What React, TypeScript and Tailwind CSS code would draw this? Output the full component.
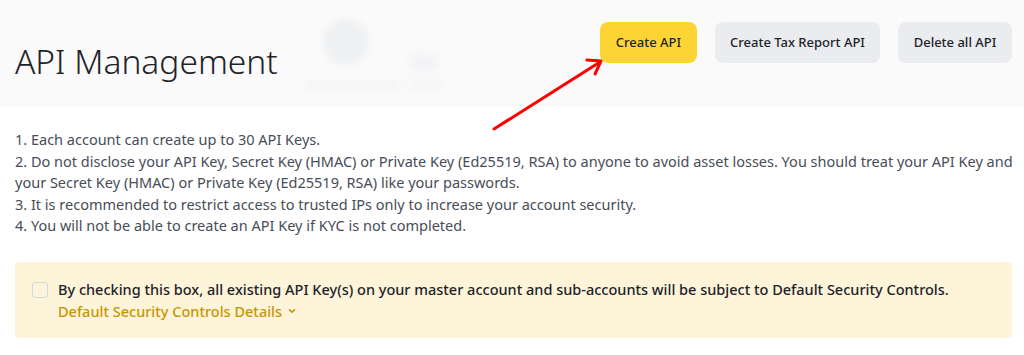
import { useState } from 'react'

const notes = [
    "1. Each account can create up to 30 API Keys.",
    "2. Do not disclose your API Key, Secret Key (HMAC) or Private Key (Ed25519, RSA) to anyone to avoid asset losses. You should treat your API Key and your Secret Key (HMAC) or Private Key (Ed25519, RSA) like your passwords.",
    "3. It is recommended to restrict access to trusted IPs only to increase your account security.",
    "4. You will not be able to create an API Key if KYC is not completed.",
]

export default function App() {
    const [checked, setChecked] = useState(false)

    return (
        <div className="relative w-[1024px] h-[355px] overflow-hidden bg-white text-[#1e2329]" style={{ fontFamily: '"Noto Sans", "Open Sans", sans-serif' }}>
            {/* header */}
            <div className="relative flex items-start justify-between h-[107px] bg-[#fafafa] pl-[15px] pr-[12px]">
                <h1 className="mt-[39px] text-[33.5px] leading-[44px] font-light">API Management</h1>

                {/* faded decoration */}
                <div className="absolute left-[323px] top-[19px] w-[46px] h-[46px] rounded-full bg-[#eef0f2] blur-[3px]" />
                <div className="absolute left-[410px] top-[54px] w-[28px] h-[18px] rounded-full bg-[#f1f2f4] blur-[4px]" />
                <div className="absolute left-[305px] top-[82px] w-[95px] h-[7px] rounded-full bg-[#f2f3f4] blur-[3px]" />
                <div className="absolute left-[410px] top-[82px] w-[32px] h-[6px] rounded-full bg-[#f2f3f4] blur-[3px]" />

                <div className="flex gap-[18px] mt-[22px]">
                    <button className="w-[97px] h-[41px] rounded-[8px] bg-[#fcd535] text-[13px] font-medium text-[#1e2329]">Create API</button>
                    <button className="w-[165px] h-[41px] rounded-[8px] bg-[#eaecef] text-[13px] font-medium text-[#1e2329]">Create Tax Report API</button>
                    <button className="w-[114px] h-[41px] rounded-[8px] bg-[#eaecef] text-[13px] font-medium text-[#1e2329]">Delete all API</button>
                </div>
            </div>

            {/* notes */}
            <div className="pl-[15px] pr-[8px] pt-[22px] text-[14.5px] leading-[21.6px] text-[#474d57]">
                {notes.map(n => (
                    <p key={n}>{n}</p>
                ))}
            </div>

            {/* notice */}
            <div className="mx-[15px] mt-[25px] mr-[12px] h-[76px] rounded-[4px] bg-[#fdf4d9] flex items-start gap-[10px] pl-[17px] pt-[17px]">
                <button
                    onClick={() => setChecked(!checked)}
                    className="w-[16px] h-[16px] mt-[3px] rounded-[3px] border border-[#d5d8dc] bg-[#fdf4d9] shrink-0"
                />
                <div>
                    <p className="text-[14.5px] leading-[21px] font-medium text-[#1e2329]">By checking this box, all existing API Key(s) on your master account and sub-accounts will be subject to Default Security Controls.</p>
                    <p className="mt-[1px] flex items-center gap-[5px] text-[14.5px] leading-[21px] font-medium text-[#c99400]">
                        Default Security Controls Details
                        <svg width="10" height="10" viewBox="0 0 10 10" fill="none"><path d="M2.5 3.8 5 6.2 7.5 3.8" stroke="#c99400" strokeWidth="1.6" strokeLinecap="round" strokeLinejoin="round" /></svg>
                    </p>
                </div>
            </div>

            {/* annotation arrow */}
            <svg className="absolute left-0 top-0 pointer-events-none" width="1024" height="355">
                <line x1="494" y1="129" x2="600" y2="62" stroke="#f00" strokeWidth="3" strokeLinecap="round" />
                <path d="M587 60 601 61 595 74" stroke="#f00" strokeWidth="3" fill="none" strokeLinecap="round" strokeLinejoin="round" />
            </svg>
        </div>
    )
}
